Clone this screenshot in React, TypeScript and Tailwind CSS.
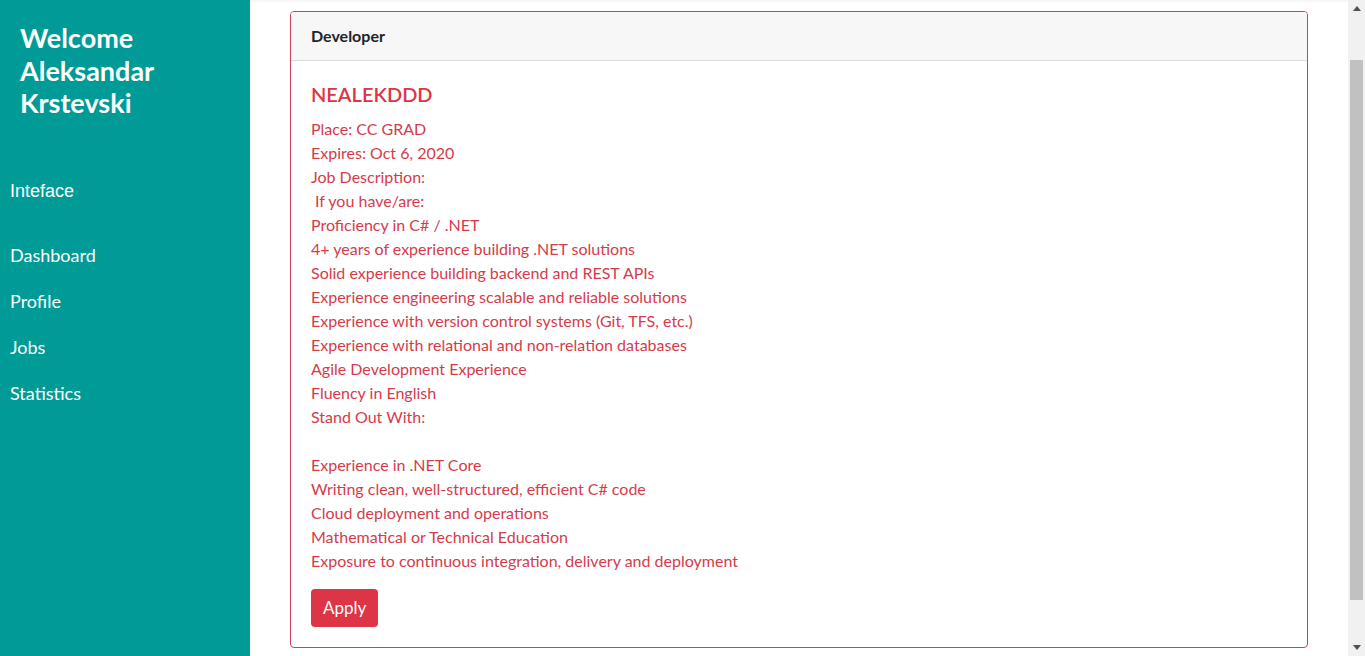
import React from "react";

const NAV = ["Dashboard", "Profile", "Jobs", "Statistics"];

const LINES = [
  "Place: CC GRAD",
  "Expires: Oct 6, 2020",
  "Job Description:",
  "\u00a0If you have/are:",
  "Proficiency in C# / .NET",
  "4+ years of experience building .NET solutions",
  "Solid experience building backend and REST APIs",
  "Experience engineering scalable and reliable solutions",
  "Experience with version control systems (Git, TFS, etc.)",
  "Experience with relational and non-relation databases",
  "Agile Development Experience",
  "Fluency in English",
  "Stand Out With:",
  "\u00a0",
  "Experience in .NET Core",
  "Writing clean, well-structured, efficient C# code",
  "Cloud deployment and operations",
  "Mathematical or Technical Education",
  "Exposure to continuous integration, delivery and deployment",
];

const font = "font-['Lato','Noto_Sans',sans-serif]";

export default function App() {
  return (
    <div className={`h-screen flex overflow-hidden bg-white ${font}`}>
      {/* sidebar */}
      <aside className="w-[250px] shrink-0 bg-[#009a97] text-white">
        <h1 className="pl-5 pt-[22px] text-[27px] font-bold leading-[32.5px] w-[200px]">
          Welcome Aleksandar Krstevski
        </h1>
        <div className="pl-[10px] mt-[58px] text-[18px] font-['Liberation_Sans',Arial,sans-serif]">
          Inteface
        </div>
        <nav className="pl-[10px] mt-[38px] flex flex-col gap-[22px] text-[18px] leading-[24px]">
          {NAV.map((n) => (
            <a key={n} className="block">
              {n}
            </a>
          ))}
        </nav>
      </aside>

      {/* main */}
      <main className="flex-1 min-w-0">
        <div className="h-[2px] bg-[#f6f6f6]" />
        <div className="px-10 pt-[9px]">
          <div className="border border-[#c8435a] rounded-[4px] overflow-hidden">
            <div className="h-[49px] bg-[#f7f7f7] border-b border-[#dcdcdc] px-5 flex items-center text-[16px] font-bold text-[#212529]">
              Developer
            </div>
            <div className="px-5 pt-[21px] pb-[20px] text-[#d63b4b]">
              <h2 className="text-[20px] font-semibold leading-[24px] mb-[11px] text-[#dc3545]">NEALEKDDD</h2>
              <div className="text-[16px] leading-[24px]">
                {LINES.map((l, i) => (
                  <div key={i}>{l}</div>
                ))}
              </div>
              <button className="mt-[16px] h-[38px] px-3 rounded-[4px] bg-[#dc3545] text-white text-[17px]">
                Apply
              </button>
            </div>
          </div>
        </div>
      </main>

      {/* scrollbar */}
      <div className="w-[17px] shrink-0 bg-[#f1f1f1] flex flex-col items-center">
        <div className="h-[17px] flex items-center justify-center">
          <svg width="8" height="5" viewBox="0 0 8 5">
            <path d="M0 5 L4 0 L8 5 Z" fill="#505050" />
          </svg>
        </div>
        <div className="mt-[43px] w-[13px] h-[540px] bg-[#c1c1c1]" />
        <div className="flex-1" />
        <div className="h-[17px] flex items-center justify-center">
          <svg width="8" height="5" viewBox="0 0 8 5">
            <path d="M0 0 L8 0 L4 5 Z" fill="#505050" />
          </svg>
        </div>
      </div>
    </div>
  );
}
